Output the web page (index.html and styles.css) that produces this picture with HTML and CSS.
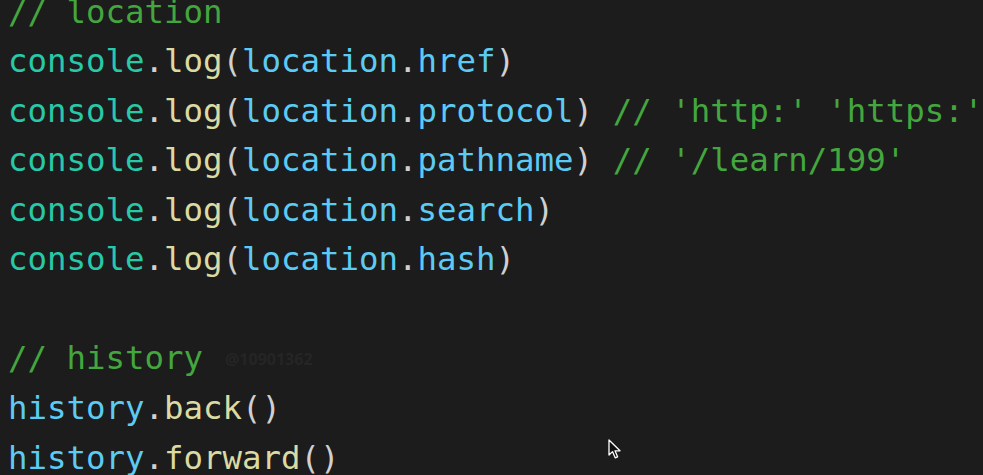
FILE: index.html
```html
<!DOCTYPE html>
<html>
<head>
<meta charset="utf-8">
<link rel="stylesheet" href="styles.css">
</head>
<body>
<div class="editor">
<pre class="code"><span class="cm">// location</span>
<span class="obj">console</span><span class="p">.</span><span class="fn">log</span><span class="p">(</span><span class="var">location</span><span class="p">.</span><span class="var">href</span><span class="p">)</span>
<span class="obj">console</span><span class="p">.</span><span class="fn">log</span><span class="p">(</span><span class="var">location</span><span class="p">.</span><span class="var">protocol</span><span class="p">)</span> <span class="cm">// 'http:' 'https:'</span>
<span class="obj">console</span><span class="p">.</span><span class="fn">log</span><span class="p">(</span><span class="var">location</span><span class="p">.</span><span class="var">pathname</span><span class="p">)</span> <span class="cm">// '/learn/199'</span>
<span class="obj">console</span><span class="p">.</span><span class="fn">log</span><span class="p">(</span><span class="var">location</span><span class="p">.</span><span class="var">search</span><span class="p">)</span>
<span class="obj">console</span><span class="p">.</span><span class="fn">log</span><span class="p">(</span><span class="var">location</span><span class="p">.</span><span class="var">hash</span><span class="p">)</span>

<span class="cm">// history</span><span class="wm">@10901362</span>
<span class="var">history</span><span class="p">.</span><span class="fn">back</span><span class="p">()</span>
<span class="var">history</span><span class="p">.</span><span class="fn">forward</span><span class="p">()</span></pre>
<svg class="pointer" width="14" height="22" viewBox="0 0 14 22">
<path d="M1 1 L1 16 L4.5 12.6 L7.2 18.8 L9.6 17.8 L7 11.8 L12 11.8 Z" fill="#111" stroke="#fff" stroke-width="1.3" stroke-linejoin="round"/>
</svg>
</div>
</body>
</html>
```
FILE: styles.css
```css
html, body {
  margin: 0;
  padding: 0;
  background: #1c1c1c;
  overflow: hidden;
}
.editor {
  position: relative;
  width: 983px;
  height: 475px;
  overflow: hidden;
}
.code {
  margin: -12px 0 0 0;
  padding: 0 0 0 8px;
  font-family: "DejaVu Sans Mono", monospace;
  font-size: 32.4px;
  line-height: 49.4px;
  color: #d4d4d4;
  white-space: pre;
}
.cm { color: #44a63e; }
.obj { color: #27c9a9; }
.fn { color: #dadaa2; }
.var { color: #5ccbf4; }
.p { color: #d0d0d0; }
.wm {
  font-family: "Open Sans", "DejaVu Sans", sans-serif;
  font-weight: 700;
  font-size: 16px;
  color: #252525;
  margin-left: 22px;
  vertical-align: 4px;
}
.pointer {
  position: absolute;
  left: 608px;
  top: 439px;
}
```
